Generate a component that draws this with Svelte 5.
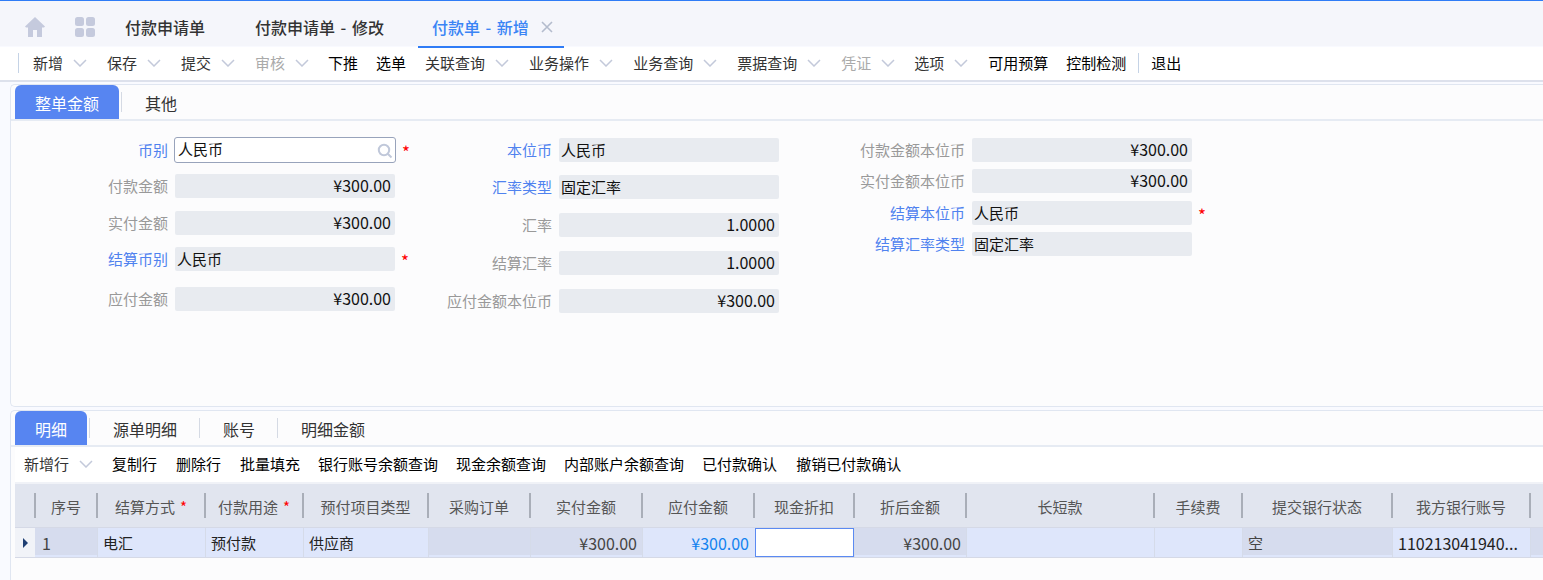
<script>
	const pageTabs = ["付款申请单", "付款申请单 - 修改"];

	const toolbar = [
		{ text: "新增", menu: true },
		{ text: "保存", menu: true },
		{ text: "提交", menu: true },
		{ text: "审核", menu: true, off: true },
		{ text: "下推" },
		{ text: "选单" },
		{ text: "关联查询", menu: true },
		{ text: "业务操作", menu: true },
		{ text: "业务查询", menu: true },
		{ text: "票据查询", menu: true },
		{ text: "凭证", menu: true, off: true },
		{ text: "选项", menu: true },
		{ text: "可用预算" },
		{ text: "控制检测" },
	];

	const columns = [
		{
			cls: "col-a",
			rows: [
				{ label: "币别", link: true, value: "人民币", search: true, required: true, gap: 0 },
				{ label: "付款金额", value: "¥300.00", num: true, gap: 12 },
				{ label: "实付金额", value: "¥300.00", num: true, gap: 13 },
				{ label: "结算币别", link: true, value: "人民币", required: true, gap: 12 },
				{ label: "应付金额", value: "¥300.00", num: true, gap: 16 },
			],
		},
		{
			cls: "col-b",
			rows: [
				{ label: "本位币", link: true, value: "人民币", gap: 0 },
				{ label: "汇率类型", link: true, value: "固定汇率", gap: 13 },
				{ label: "汇率", value: "1.0000", num: true, gap: 14 },
				{ label: "结算汇率", value: "1.0000", num: true, gap: 14 },
				{ label: "应付金额本位币", value: "¥300.00", num: true, gap: 14 },
			],
		},
		{
			cls: "col-c",
			rows: [
				{ label: "付款金额本位币", value: "¥300.00", num: true, gap: 0 },
				{ label: "实付金额本位币", value: "¥300.00", num: true, gap: 7 },
				{ label: "结算本位币", link: true, value: "人民币", required: true, gap: 8 },
				{ label: "结算汇率类型", link: true, value: "固定汇率", gap: 7 },
			],
		},
	];

	const detailTabs = ["源单明细", "账号", "明细金额"];
	const lineActions = ["复制行", "删除行", "批量填充", "银行账号余额查询", "现金余额查询", "内部账户余额查询", "已付款确认", "撤销已付款确认"];

	const gridCols = [
		{ title: "序号", w: 62, value: "1", ro: true, first: true, digits: true },
		{ title: "结算方式", w: 108, value: "电汇", req: true },
		{ title: "付款用途", w: 98, value: "预付款", req: true },
		{ title: "预付项目类型", w: 125, value: "供应商" },
		{ title: "采购订单", w: 102, value: "", ro: true },
		{ title: "实付金额", w: 112, value: "¥300.00", ro: true, num: true, digits: true },
		{ title: "应付金额", w: 112, value: "¥300.00", num: true, digits: true, blue: true },
		{ title: "现金折扣", w: 100, value: "", editing: true },
		{ title: "折后金额", w: 112, value: "¥300.00", ro: true, num: true, digits: true },
		{ title: "长短款", w: 188, value: "" },
		{ title: "手续费", w: 88, value: "" },
		{ title: "提交银行状态", w: 150, value: "空", ro: true },
		{ title: "我方银行账号", w: 138, value: "110213041940...", digits: true },
		{ title: "", w: 20, value: "", ro: true },
	];
</script>

{#snippet chevron()}
	<svg class="chevron" width="14" height="8" viewBox="0 0 14 8" aria-hidden="true">
		<path d="M1 1l6 6 6-6" fill="none" stroke="#c3c9da" stroke-width="1.5" />
	</svg>
{/snippet}

<div class="page">
	<header class="page-tabs">
		<svg class="home" width="20" height="20" viewBox="0 0 20 20" aria-hidden="true">
			<path d="M10 0L0 9.5l1 1h2V20h5v-7h4v7h5v-9.5h2l1-1z" fill="#c5cadd" />
		</svg>
		<svg class="apps" width="20" height="20" viewBox="0 0 20 20" aria-hidden="true">
			<rect width="9" height="9" rx="2.5" fill="#c5cadd" />
			<rect x="11" width="9" height="9" rx="2.5" fill="#c5cadd" />
			<rect y="11" width="9" height="9" rx="2.5" fill="#c5cadd" />
			<rect x="11" y="11" width="9" height="9" rx="2.5" fill="#c5cadd" />
		</svg>
		{#each pageTabs as tab}
			<span class="page-tab">{tab}</span>
		{/each}
		<span class="page-tab active">
			付款单 - 新增
			<svg width="12" height="12" viewBox="0 0 12 12" aria-hidden="true">
				<path d="M1 1l10 10M11 1L1 11" stroke="#b4bccd" stroke-width="1.6" />
			</svg>
		</span>
	</header>

	<nav class="toolbar">
		<i class="tool-sep"></i>
		<div class="tool-items">
			{#each toolbar as item}
				<span class="tool" class:off={item.off} class:menu={item.menu}>
					{item.text}
					{#if item.menu}{@render chevron()}{/if}
				</span>
			{/each}
		</div>
		<i class="tool-sep right"></i>
		<span class="tool">退出</span>
	</nav>

	<section class="panel head-panel">
		<div class="tabs">
			<span class="tab active">整单金额</span>
			<i class="tab-sep"></i>
			<span class="tab">其他</span>
		</div>
		<div class="form">
			{#each columns as col}
				<div class="form-col {col.cls}">
					{#each col.rows as row}
						<div class="field" style="margin-top: {row.gap}px">
							<label class:link={row.link}>{row.label}</label>
							<div class="value" class:num={row.num} class:search={row.search}>
								{row.value}
								{#if row.search}
									<svg width="16" height="16" viewBox="0 0 16 16" aria-hidden="true">
										<circle cx="7" cy="7" r="5.2" fill="none" stroke="#c0c8da" stroke-width="2" />
										<path d="M11 11l3.5 3.5" stroke="#c0c8da" stroke-width="2" />
									</svg>
								{/if}
							</div>
							{#if row.required}<span class="star">*</span>{/if}
						</div>
					{/each}
				</div>
			{/each}
		</div>
	</section>

	<section class="panel detail-panel">
		<div class="tabs">
			<span class="tab active small">明细</span>
			{#each detailTabs as tab}
				<i class="tab-sep"></i>
				<span class="tab">{tab}</span>
			{/each}
		</div>
		<div class="line-actions">
			<span class="tool menu">新增行 {@render chevron()}</span>
			{#each lineActions as action}
				<span class="tool">{action}</span>
			{/each}
		</div>
		<div class="grid">
			<div class="grid-head">
				<div class="gutter"></div>
				{#each gridCols as col}
					<div class="th" style="width: {col.w}px">
						{col.title}{#if col.req}<span class="req">*</span>{/if}
					</div>
				{/each}
			</div>
			<div class="grid-row">
				<div class="gutter marker"><i></i></div>
				{#each gridCols as col}
					<div
						class="td"
						class:ro={col.ro}
						class:num={col.num}
						class:digits={col.digits}
						class:blue={col.blue}
						class:editing={col.editing}
						class:first={col.first}
						style="width: {col.w}px"
					>
						<span>{col.value}</span>
					</div>
				{/each}
			</div>
		</div>
	</section>
</div>

<style>
	:global(body) {
		margin: 0;
		overflow: hidden;
		background: #f9faff;
	}

	.page {
		height: 580px;
		font-family: "Noto Sans CJK SC", sans-serif;
		font-size: 15px;
		color: #333;
		overflow: hidden;
	}

	.page-tabs {
		height: 46px;
		box-sizing: border-box;
		border-top: 1px solid #2f7cf6;
		background: #f5f6fb;
		display: flex;
		align-items: flex-start;
		padding-left: 25px;
	}

	.home {
		margin-top: 16px;
	}

	.apps {
		margin: 16px 0 0 30px;
	}

	.page-tab {
		height: 45px;
		box-sizing: border-box;
		line-height: 53px;
		font-size: 16px;
		font-weight: 500;
		word-spacing: 2px;
		margin-left: 50px;
		white-space: nowrap;
		color: #333;
	}

	.apps + .page-tab {
		margin-left: 30px;
	}

	.page-tab.active {
		margin-left: 34px;
		padding: 0 11px 0 14px;
		color: #3a84f5;
		border-bottom: 2px solid #2f7cf6;
		height: 47px;
		display: flex;
		gap: 12px;
		align-items: flex-start;
		position: relative;
	}

	.page-tab.active svg {
		margin-top: 20px;
	}

	.toolbar {
		height: 35px;
		box-sizing: border-box;
		margin-top: 1px;
		padding: 0 0 2px 18px;
		background: #fff;
		border-bottom: 2px solid #dde1ec;
		display: flex;
		align-items: center;
	}

	.tool-sep {
		width: 1px;
		height: 20px;
		background: #c5d3e6;
		margin-right: 14px;
	}

	.tool-sep.right {
		margin: 0 12px;
	}

	.tool-items,
	.line-actions {
		display: flex;
		align-items: center;
		gap: 18px;
	}

	.tool {
		display: flex;
		align-items: center;
		line-height: 20px;
		color: #000;
		white-space: nowrap;
	}

	.tool.menu {
		color: #333;
	}

	.tool.off {
		color: #aaa;
	}

	.tool:not(.menu) + .tool.menu {
		margin-left: 1px;
	}

	.chevron {
		margin: 0 2px 0 10px;
	}

	.tool.off .chevron,
	.line-actions .chevron {
		margin-right: 1px;
	}

	.panel {
		margin-left: 10px;
		box-sizing: border-box;
		border: 1px solid #e0e6f1;
		border-right: none;
		background: #fcfcfd;
		border-radius: 5px 0 0 5px;
	}

	.head-panel {
		height: 323px;
		margin-top: 2px;
	}

	.detail-panel {
		height: 172px;
		margin-top: 3px;
		border-bottom: none;
		border-radius: 5px 0 0 0;
	}

	.tabs {
		height: 36px;
		box-sizing: border-box;
		display: flex;
		align-items: flex-end;
		padding-left: 4px;
		border-bottom: 2px solid #e6ebf3;
	}

	.tab {
		padding: 0 22px 0 23px;
		height: 34px;
		line-height: 37px;
		font-size: 16px;
		color: #333;
	}

	.tab.active {
		padding: 0 20px;
		margin-right: 2px;
		width: 64px;
		background: #5785f1;
		color: #fff;
		border-radius: 6px 6px 0 0;
	}

	.tab.active.small {
		width: 32px;
	}

	.tab-sep {
		width: 1px;
		height: 20px;
		background: #d5dae4;
		margin-bottom: 7px;
	}

	.form {
		display: flex;
		padding-top: 17px;
	}

	.form-col {
		display: flex;
		flex-direction: column;
	}

	.col-a {
		width: 384px;
		--label: 157px;
	}

	.col-b {
		width: 413px;
		--label: 157px;
	}

	.field {
		display: flex;
		align-items: center;
		height: 24px;
	}

	label {
		width: var(--label, 157px);
		flex: none;
		text-align: right;
		color: #999;
		white-space: nowrap;
		margin: -2px 7px 0 0;
		direction: rtl;
	}

	label.link {
		color: #4f82ef;
	}

	.value {
		width: 220px;
		height: 24px;
		box-sizing: border-box;
		padding: 0 4px 0 2px;
		background: #e8ebf0;
		border-radius: 2px;
		line-height: 23px;
		color: #111;
		flex: none;
		position: relative;
	}

	.value.num {
		text-align: right;
		line-height: 23px;
		font-size: 16px;
	}

	.value.search {
		background: #fff;
		border: 1px solid #98a3bb;
		border-radius: 3px;
		padding-left: 3px;
		line-height: 22px;
		margin-left: -1px;
		width: 222px;
		height: 26px;
	}

	.value svg {
		position: absolute;
		right: 2px;
		top: 5px;
	}

	.star {
		color: #f00;
		margin-left: 6px;
		font-size: 17px;
		line-height: 24px;
		padding-top: 3px;
	}

	.line-actions {
		height: 33px;
		padding: 0 0 2px 9px;
		margin-left: 4px;
		background: #fff;
		border-bottom: 2px solid #f0f2f7;
		box-sizing: content-box;
	}

	/* the reference's spacing is not quite even here */
	.line-actions .tool:nth-child(2),
	.line-actions .tool:nth-child(3),
	.line-actions .tool:nth-child(8) {
		margin-right: 1px;
	}

	.grid {
		margin-left: 4px;
		width: 1600px;
	}

	.grid-head,
	.grid-row {
		display: flex;
	}

	.grid-head {
		height: 43px;
		background: #e1e5ef;
		border-bottom: 1px solid #d5d9e6;
		box-sizing: content-box;
	}

	.gutter {
		width: 19px;
		flex: none;
		position: relative;
	}

	.marker {
		width: 20px;
		background: #f1f3f8;
	}

	.marker i {
		position: absolute;
		left: 8px;
		top: 10px;
		border-left: 5px solid #1f3f73;
		border-top: 5px solid transparent;
		border-bottom: 5px solid transparent;
	}

	.th {
		flex: none;
		box-sizing: border-box;
		border-left: 2px solid #a9aeb8;
		height: 25px;
		margin-top: 9px;
		line-height: 27px;
		text-align: center;
		color: #555;
		white-space: nowrap;
	}

	.req {
		color: #f00;
		margin-left: 5px;
	}

	.grid-row {
		height: 29px;
		border-bottom: 1px solid #d5d9e6;
		background: #dee6fb;
	}

	.td {
		flex: none;
		box-sizing: border-box;
		border-left: 1px solid #d5dbe9;
		padding: 0 5px;
		line-height: 30px;
		color: #222;
		white-space: nowrap;
		overflow: hidden;
	}

	.td.ro {
		background: linear-gradient(#d6dcee 27px, #dee6fb 27px);
		color: #444;
	}

	.td.num {
		text-align: right;
	}

	.td.digits {
		font-size: 16px;
	}

	.td.blue {
		color: #1282ef;
	}

	.td.first {
		border-left: none;
		padding-left: 7px;
	}

	.td.editing {
		position: relative;
		border-left: none;
	}

	.td.editing::after {
		content: "";
		position: absolute;
		inset: 0 0 0 1px;
		background: #fff;
		border: 1px solid #5b8af2;
	}
</style>
